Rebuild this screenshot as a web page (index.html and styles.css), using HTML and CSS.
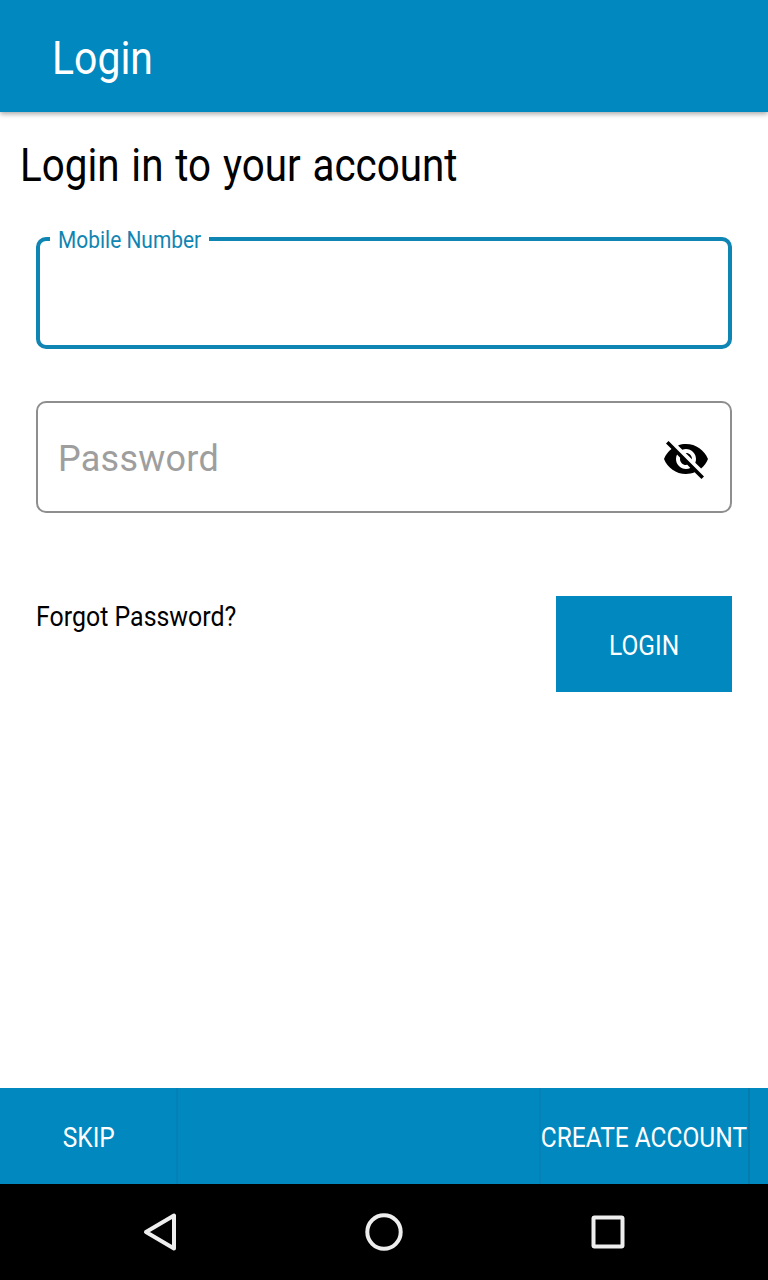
FILE: index.html
```html
<!DOCTYPE html>
<html lang="en">
<head>
  <meta charset="UTF-8" />
  <meta name="viewport" content="width=device-width, initial-scale=1.0"/>
  <title>Login</title>
  <link rel="stylesheet" href="styles.css">
</head>
<body>
  <header class="app-bar">
    <h1><span class="text">Login</span></h1>
  </header>

  <main class="content">
    <h2><span class="text">Login in to your account</span></h2>

    <form class="login-form">
      <fieldset class="field active">
        <legend><span class="text">Mobile Number</span></legend>
        <input type="tel" aria-label="Mobile Number">
      </fieldset>

      <div class="field password">
        <input type="password" placeholder="Password" aria-label="Password">
        <svg class="eye" viewBox="0 0 24 24" width="48" height="48">
          <path d="M12 7c2.76 0 5 2.24 5 5 0 .65-.13 1.26-.36 1.83l2.92 2.92c1.51-1.26 2.7-2.89 3.43-4.75-1.73-4.39-6-7.5-11-7.5-1.4 0-2.74.25-3.98.7l2.16 2.16C10.74 7.13 11.35 7 12 7zM2 4.27l2.28 2.28.46.46C3.08 8.3 1.78 10.02 1 12c1.73 4.39 6 7.5 11 7.5 1.55 0 3.03-.3 4.38-.84l.42.42L19.73 22 21 20.73 3.27 3 2 4.27zM7.53 9.8l1.55 1.55c-.05.21-.08.43-.08.65 0 1.66 1.34 3 3 3 .22 0 .44-.03.65-.08l1.55 1.55c-.67.33-1.41.53-2.2.53-2.76 0-5-2.24-5-5 0-.79.2-1.53.53-2.2zm4.31-.78l3.15 3.15.02-.16c0-1.66-1.34-3-3-3l-.17.01z"/>
        </svg>
      </div>

      <div class="actions">
        <a class="forgot"><span class="text">Forgot Password?</span></a>
        <button type="button" class="btn-login"><span class="text">LOGIN</span></button>
      </div>
    </form>
  </main>

  <footer class="bottom-bar">
    <button type="button" class="btn-skip"><span class="text">SKIP</span></button>
    <button type="button" class="btn-create"><span class="text">CREATE ACCOUNT</span></button>
  </footer>

  <nav class="system-nav">
    <svg viewBox="0 0 48 48"><path d="M38 7.5v33L10 24z"/></svg>
    <svg viewBox="0 0 48 48"><circle cx="24" cy="24" r="16.7"/></svg>
    <svg viewBox="0 0 48 48"><rect x="9.5" y="9.5" width="29" height="29" rx="1"/></svg>
  </nav>
</body>
</html>
```
FILE: styles.css
```css
* {
  box-sizing: border-box;
}

body {
  font-family: Roboto, sans-serif;
  background-color: #fff;
  color: #000;
  margin: 0;
  height: 1280px;
  display: flex;
  flex-direction: column;
}

h1, h2 {
  font-weight: 400;
  margin: 0;
}

/* condensed look for the labels */
.text {
  display: inline-block;
  white-space: nowrap;
  transform: scaleX(0.89);
  transform-origin: left center;
}

.app-bar {
  height: 112px;
  padding: 4px 52px 0;
  background-color: #0088bf;
  color: #fff;
  box-shadow: 0 2px 5px rgba(0, 0, 0, 0.35);
  display: flex;
  align-items: center;
}

.app-bar h1 {
  font-size: 46px;
  line-height: 54px;
}

.content {
  flex: 1;
}

h2 {
  font-size: 46px;
  line-height: 54px;
  padding: 26px 20px 0;
}

h2 .text {
  transform: scaleX(0.878);
  word-spacing: 2px;
}

.login-form {
  padding: 36px 36px 0;
}

.field {
  height: 112px;
  margin: 0;
  border: 2px solid #8e8e8e;
  border-radius: 10px;
}

.active {
  height: 121px;
  padding: 0 10px;
  border: 4px solid #0f85b3;
  color: #0f85b3;
}

.active legend {
  width: 159px;
  padding: 3px 8px 0;
  font-size: 24px;
  line-height: 19px;
}

.active legend .text {
  transform: scaleX(0.872);
}

.field input {
  width: 100%;
  border: 0;
  outline: 0;
  padding: 0;
  background: transparent;
  font: 36px Roboto, sans-serif;
  letter-spacing: 0.25px;
}

.field input::placeholder {
  color: #9e9e9e;
  opacity: 1;
}

.password {
  margin-top: 52px;
  padding: 4px 20px 0;
  display: flex;
  align-items: center;
}

.eye {
  flex: none;
}

.actions {
  display: flex;
  justify-content: space-between;
  align-items: flex-start;
  margin-top: 83px;
}

.forgot {
  padding-top: 1px;
  font-size: 28px;
  line-height: 40px;
}

button {
  border: 0;
  padding: 2px 0 0;
  height: 96px;
  background-color: #0088bf;
  color: #fff;
  font: 28px Roboto, sans-serif;
}

button .text {
  transform: scaleX(0.875);
  transform-origin: center;
}

.btn-login {
  width: 176px;
}

.bottom-bar {
  height: 96px;
  padding-right: 18px;
  background-color: #0088bf;
  display: flex;
  justify-content: space-between;
}

.btn-skip {
  width: 178px;
  padding-left: 1px;
  border-right: 2px solid #0482b8;
}

.btn-create {
  width: 211px;
  padding-right: 1px;
  border-left: 2px solid #0482b8;
  border-right: 2px solid #057cae;
  display: flex;
  align-items: center;
  justify-content: center;
}

.system-nav {
  height: 96px;
  background-color: #000;
  display: flex;
  justify-content: center;
  align-items: center;
  gap: 176px;
}

.system-nav svg {
  width: 48px;
  height: 48px;
  fill: none;
  stroke: #eee;
  stroke-width: 4;
  stroke-linejoin: round;
}
```
